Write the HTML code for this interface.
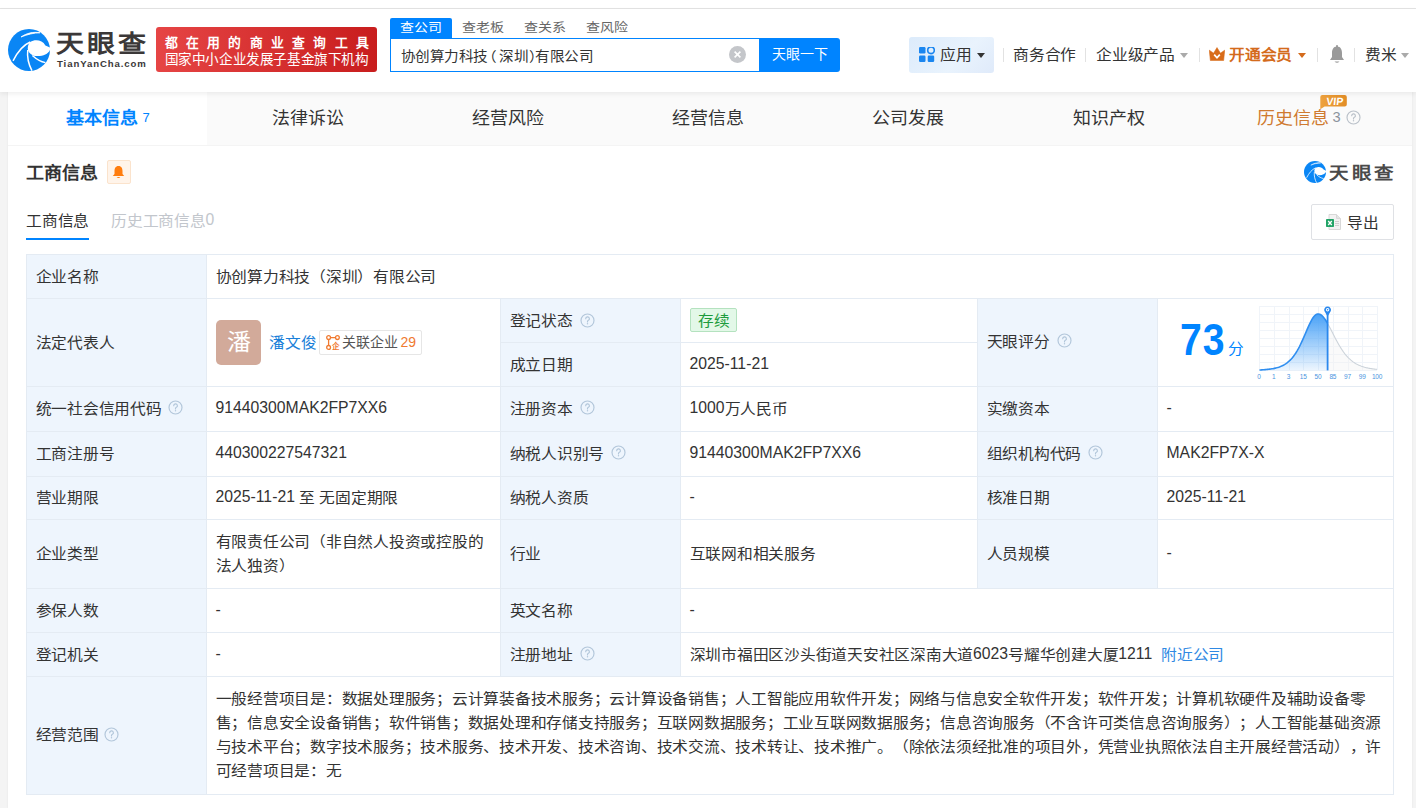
<!DOCTYPE html>
<html lang="zh-CN">
<head>
<meta charset="utf-8">
<title>天眼查</title>
<style>
*{box-sizing:border-box;margin:0;padding:0}
html,body{width:1416px;height:808px;overflow:hidden}
body{text-spacing-trim:space-all;position:relative;background:#f4f4f4;font-family:"Liberation Sans",sans-serif;color:#333;font-size:15.75px}
.a{position:absolute;white-space:nowrap}
.t{position:absolute;white-space:nowrap;line-height:24px;height:24px}
.sep{position:absolute;top:48px;width:1px;height:14px;background:#e2e2e2}
.caret{position:absolute;width:0;height:0;border-left:4px solid transparent;border-right:4px solid transparent;border-top:5px solid #999}
.tab{position:absolute;top:92px;height:53px;line-height:53px;font-size:18px;text-align:center;color:#333}
.cell{position:absolute;background:#fff}
.lb{background:#eef5fd}
.q{position:absolute;width:15px;height:15px}
.c,.c0{display:inline-block;transform:scaleY(.94);transform-origin:50% 46%;letter-spacing:-.25px}
.c0{letter-spacing:0}
.t .c{transform:translateY(1px) scaleY(.94)}
</style>
</head>
<body>
<div class="a" style="left:0;top:0;width:1416px;height:9px;background:#fff;border-bottom:1px solid #e3e3e3"></div>
<div class="a" style="left:0;top:9px;width:1416px;height:83px;background:#fff;box-shadow:0 2px 5px rgba(0,0,0,.065);z-index:3"></div>
<div class="a" style="left:0;top:0;width:1416px;height:92px;z-index:4">
<svg viewBox="0 0 100 100" width="42" height="42" style="position:absolute;left:8px;top:29px"><circle cx="50" cy="50" r="50" fill="#0a86f5"/><path d="M53 31 C64 24 82 26 89 39 L100 44 L100 50 C95 61 80 66 64 64 C54 62 47 54 47 46 C47 39 50 34 53 31 Z" fill="#fff"/><path d="M12 76 C22 56 36 38 53 31" stroke="#fff" stroke-width="3.5" fill="none"/><path d="M47 50 C45 68 50 86 57 99" stroke="#fff" stroke-width="3.5" fill="none"/><path d="M58 63 C68 72 78 78 89 80" stroke="#fff" stroke-width="3.5" fill="none"/><path d="M31 19 C44 10 60 6 76 9 C62 9 46 13 31 19 Z" fill="#fff" stroke="#fff" stroke-width="2"/></svg>
<div class="a" style="left:56px;top:26px;font-size:28px;line-height:36px;font-weight:bold;color:#3b3838;letter-spacing:3px;transform:scaleY(.86);transform-origin:0 60%">天眼查</div>
<div class="a" style="left:57px;top:57px;font-size:9.6px;line-height:14px;font-weight:bold;color:#3b3838;letter-spacing:0.9px">TianYanCha.com</div>
<div class="a" style="left:156px;top:27px;width:221px;height:45px;border-radius:3px;background:linear-gradient(90deg,#e64545,#c81d1d)"><div class="a" style="left:8.5px;top:7px;font-size:12.8px;line-height:18px;font-weight:bold;color:#fff;letter-spacing:8.25px">都在用的商业查询工具</div><div class="a" style="left:8.5px;top:24px;font-size:13.6px;line-height:18px;color:#fff;letter-spacing:-0.4px">国家中小企业发展子基金旗下机构</div></div>
<div class="a" style="left:390px;top:18px;width:62px;height:21px;background:#0084ff;border-radius:2px 2px 0 0"></div>
<div class="a" style="left:400px;top:18px;font-size:14px;line-height:20px;color:#fff"><span class="c0" style="transform:scaleY(.88);transform-origin:50% 15%">查公司</span></div>
<div class="a" style="left:462px;top:18px;font-size:14px;line-height:20px;color:#666"><span class="c0" style="transform:scaleY(.88);transform-origin:50% 15%">查老板</span></div>
<div class="a" style="left:524px;top:18px;font-size:14px;line-height:20px;color:#666"><span class="c0" style="transform:scaleY(.88);transform-origin:50% 15%">查关系</span></div>
<div class="a" style="left:586px;top:18px;font-size:14px;line-height:20px;color:#666"><span class="c0" style="transform:scaleY(.88);transform-origin:50% 15%">查风险</span></div>
<div class="a" style="left:390px;top:38px;width:370px;height:34px;border:1px solid #0084ff;background:#fff"></div>
<div class="a" style="left:400.8px;top:44px;font-size:14.6px;line-height:24px;color:#333"><span class="c0" style="letter-spacing:-.5px">协创算力科技</span></div>
<div class="a" style="left:481.5px;top:44px;font-size:14.6px;line-height:24px;color:#333"><span class="c0" style="letter-spacing:0">（</span></div>
<div class="a" style="left:499.2px;top:44px;font-size:14.6px;line-height:24px;color:#333"><span class="c0" style="letter-spacing:-.5px">深圳</span></div>
<div class="a" style="left:529px;top:44px;font-size:14.6px;line-height:24px;color:#333"><span class="c0" style="letter-spacing:0">）</span></div>
<div class="a" style="left:535.4px;top:44px;font-size:14.6px;line-height:24px;color:#333"><span class="c0" style="letter-spacing:-.5px">有限公司</span></div>
<svg class="a" style="left:729px;top:46px" width="17" height="17" viewBox="0 0 17 17"><circle cx="8.5" cy="8.5" r="8.5" fill="#c4c6ca"/><path d="M5.6 5.6l5.8 5.8M11.4 5.6l-5.8 5.8" stroke="#fff" stroke-width="1.6"/></svg>
<div class="a" style="left:759px;top:38px;width:81px;height:34px;background:#0084ff;border-radius:0 3px 3px 0"></div>
<div class="a" style="left:771.5px;top:41.5px;font-size:14px;line-height:24px;color:#fff"><span class="c0">天眼一下</span></div>
<div class="a" style="left:909px;top:37px;width:85px;height:36px;background:linear-gradient(135deg,#dcebfb,#e9f3fd 60%,#dfeafa);border-radius:3px"></div>
<svg class="a" style="left:919px;top:47px" width="16" height="15" viewBox="0 0 16 15"><rect x="0" y="0" width="6.5" height="6.5" rx="1.2" fill="#1a86f0"/><circle cx="12" cy="3.3" r="3.3" fill="none" stroke="#1a86f0" stroke-width="1.6"/><rect x="0" y="8.5" width="6.5" height="6.5" rx="1.2" fill="#1a86f0"/><rect x="8.7" y="8.5" width="6.5" height="6.5" rx="1.2" fill="#1a86f0"/></svg>
<div class="t" style="left:940px;top:42px;color:#333"><span class="c">应用</span></div>
<div class="caret" style="left:977px;top:53px;border-top-color:#333"></div>
<div class="sep" style="left:1003px"></div>
<div class="sep" style="left:1085px"></div>
<div class="sep" style="left:1199px"></div>
<div class="sep" style="left:1317px"></div>
<div class="sep" style="left:1354px"></div>
<div class="t" style="left:1013px;top:42px"><span class="c">商务合作</span></div>
<div class="t" style="left:1096px;top:42px"><span class="c">企业级产品</span></div>
<div class="caret" style="left:1180px;top:53px;border-top-color:#aaa"></div>
<svg class="a" style="left:1209px;top:47px" width="16" height="14" viewBox="0 0 16 14"><path d="M0.3 3.2 L4.6 6.2 L8 0.6 L11.4 6.2 L15.7 3.2 L14.6 13.6 L1.4 13.6 Z" fill="#d86c1a" stroke="#d86c1a" stroke-width=".6" stroke-linejoin="round"/><path d="M5.2 7.6 L8 10.8 L10.8 7.6" stroke="#fff" stroke-width="1.7" fill="none"/></svg>
<div class="t" style="left:1229px;top:42px;color:#d46b1c;font-weight:bold"><span class="c">开通会员</span></div>
<div class="caret" style="left:1298px;top:53px;border-top-color:#d46b1c"></div>
<svg class="a" style="left:1329px;top:45px" width="16" height="19" viewBox="0 0 16 19"><path d="M8 1.5 C4 1.5 3 5 3 8 L3 12 L1 15 L15 15 L13 12 L13 8 C13 5 12 1.5 8 1.5 Z" fill="#9a9a9a"/><rect x="7" y="0" width="2" height="2.5" rx="1" fill="#9a9a9a"/><path d="M5.5 16.5 Q8 19 10.5 16.5 Z" fill="#9a9a9a"/></svg>
<div class="t" style="left:1365px;top:42px"><span class="c">费米</span></div>
<div class="caret" style="left:1401px;top:53px;border-top-color:#aaa"></div>
</div>
<div class="a" style="left:8px;top:92px;width:1404px;height:716px;background:#fff;box-shadow:0 0 2px rgba(0,0,0,.07)"></div>
<div class="a" style="left:8px;top:92px;width:1404px;height:53px;background:#fafafa"></div>
<div class="a" style="left:8px;top:92px;width:199px;height:53px;background:#fff"></div>
<div class="a" style="left:8px;top:145px;width:1404px;height:1px;background:#f4f4f4"></div>
<div class="tab" style="left:8.00px;width:200.10px"><b style="color:#0084ff"><span class="c0">基本信息</span></b><span style="font-size:13px;color:#0084ff;margin-left:4px;position:relative;top:-2px">7</span></div>
<div class="tab" style="left:208.10px;width:200.10px"><span class="c0">法律诉讼</span></div>
<div class="tab" style="left:408.20px;width:200.10px"><span class="c0">经营风险</span></div>
<div class="tab" style="left:608.30px;width:200.10px"><span class="c0">经营信息</span></div>
<div class="tab" style="left:808.40px;width:200.10px"><span class="c0">公司发展</span></div>
<div class="tab" style="left:1008.50px;width:200.10px"><span class="c0">知识产权</span></div>
<div class="tab" style="left:1208.60px;width:200.10px"><span style="color:#cf7a30"><span class="c0">历史信息</span></span><span style="font-size:14.6px;color:#8c939d;margin-left:4px;position:relative;top:-2px">3</span><span style="display:inline-block;width:20px"></span></div>
<svg class="q" style="left:1346px;top:110.3px" viewBox="0 0 15 15"><circle cx="7.5" cy="7.5" r="6.5" fill="none" stroke="#bac1c9" stroke-width="1.15"/><path d="M5.7 5.7a1.85 1.85 0 1 1 2.7 1.65c-.55.3-.9.6-.9 1.25v.35" fill="none" stroke="#bac1c9" stroke-width="1.15" stroke-linecap="round"/><circle cx="7.5" cy="10.7" r=".7" fill="#bac1c9"/></svg>
<svg class="a" style="left:1320px;top:95px" width="28" height="15" viewBox="0 0 28 15"><defs><linearGradient id="vg" x1="0" x2="1"><stop offset="0" stop-color="#eea23e"/><stop offset="1" stop-color="#e28d26"/></linearGradient></defs><path d="M2.3 0 H24.7 Q26.8 0 26.8 2 V9.6 Q26.8 11.6 24.7 11.6 H4.6 L0.3 14.2 V2 Q0.3 0 2.3 0 Z" fill="url(#vg)"/><text x="14.6" y="10.2" font-family="Liberation Sans" font-weight="bold" font-size="10.5" fill="#fff" text-anchor="middle" transform="skewX(-6) translate(1,0)">VIP</text></svg>
<div class="a" style="left:26px;top:160px;font-size:18px;line-height:26px;font-weight:bold;color:#333"><span class="c0">工商信息</span></div>
<div class="a" style="left:107px;top:160px;width:24px;height:24px;background:#fff4ea;border:1px solid #fbe3cc;border-radius:2px"></div>
<svg class="a" style="left:112px;top:165px" width="13" height="14" viewBox="0 0 13 14"><path d="M6.5 1 C3.5 1 2.5 3.5 2.5 6 L2.5 9 L0.8 11 L12.2 11 L10.5 9 L10.5 6 C10.5 3.5 9.5 1 6.5 1 Z" fill="#ff7d0f"/><path d="M4.6 12 Q6.5 14.2 8.4 12 Z" fill="#ff7d0f"/></svg>
<svg viewBox="0 0 100 100" width="22" height="22" style="position:absolute;left:1304px;top:161px"><circle cx="50" cy="50" r="50" fill="#0a86f5"/><path d="M53 31 C64 24 82 26 89 39 L100 44 L100 50 C95 61 80 66 64 64 C54 62 47 54 47 46 C47 39 50 34 53 31 Z" fill="#fff"/><path d="M12 76 C22 56 36 38 53 31" stroke="#fff" stroke-width="3.5" fill="none"/><path d="M47 50 C45 68 50 86 57 99" stroke="#fff" stroke-width="3.5" fill="none"/><path d="M58 63 C68 72 78 78 89 80" stroke="#fff" stroke-width="3.5" fill="none"/><path d="M31 19 C44 10 60 6 76 9 C62 9 46 13 31 19 Z" fill="#fff" stroke="#fff" stroke-width="2"/></svg>
<div class="a" style="left:1329px;top:157.5px;font-size:19.5px;line-height:28px;font-weight:bold;color:#4a4a4a;letter-spacing:2.6px;transform:scaleY(.88);transform-origin:0 75%">天眼查</div>
<div class="t" style="left:26px;top:208px;color:#333"><span class="c">工商信息</span></div>
<div class="a" style="left:26px;top:238px;width:63px;height:2px;background:#0084ff"></div>
<div class="t" style="left:111px;top:208px;color:#c2c6cc"><span class="c">历史工商信息</span>0</div>
<div class="a" style="left:1311px;top:204px;width:83px;height:36px;border:1px solid #dfe1e5;border-radius:2px;background:#fff"></div>
<svg class="a" style="left:1326px;top:214px" width="15" height="16" viewBox="0 0 15 16"><path d="M3 0.5 H10.5 L14.5 4.5 V15.5 H3 Z" fill="#f2f2f2" stroke="#d8d8d8" stroke-width="1"/><path d="M10.5 0.5 V4.5 H14.5" fill="#e4e4e4" stroke="#d8d8d8" stroke-width="1"/><rect x="9" y="7" width="4" height="1" fill="#cfcfcf"/><rect x="9" y="9" width="4" height="1" fill="#cfcfcf"/><rect x="9" y="11" width="4" height="1" fill="#cfcfcf"/><rect x="0" y="5" width="8" height="8" rx="0.8" fill="#21a366"/><path d="M2.2 7 L5.8 11 M5.8 7 L2.2 11" stroke="#fff" stroke-width="1.3"/></svg>
<div class="t" style="left:1347px;top:210px;color:#333"><span class="c">导出</span></div>
<div class="a" style="left:26px;top:254px;width:1368px;height:541px;background:#e4ebf3"></div>
<div class="cell lb" style="left:27px;top:255px;width:179px;height:43px"></div>
<div class="cell" style="left:207px;top:255px;width:1186px;height:43px"></div>
<div class="t" style="left:35.5px;top:263.8px;"><span class="c">企业名称</span></div>
<div class="t" style="left:215.5px;top:263.8px;"><span class="c">协创算力科技（深圳）有限公司</span></div>
<div class="cell lb" style="left:27px;top:299px;width:179px;height:87px"></div>
<div class="cell" style="left:207px;top:299px;width:293px;height:87px"></div>
<div class="cell lb" style="left:501px;top:299px;width:179px;height:43px"></div>
<div class="cell" style="left:681px;top:299px;width:296px;height:43px"></div>
<div class="cell lb" style="left:501px;top:343px;width:179px;height:43px"></div>
<div class="cell" style="left:681px;top:343px;width:296px;height:43px"></div>
<div class="cell lb" style="left:978px;top:299px;width:179px;height:87px"></div>
<div class="cell" style="left:1158px;top:299px;width:235px;height:87px"></div>
<div class="t" style="left:35.5px;top:329.8px;"><span class="c">法定代表人</span></div>
<div class="a" style="left:216px;top:320px;width:45px;height:45px;background:#d2aa9a;border-radius:5px;color:#fff;font-size:24px;line-height:45px;text-align:center"><span class="c0">潘</span></div>
<div class="t" style="left:269px;top:329.8px;color:#1a7fd9"><span class="c">潘文俊</span></div>
<div class="a" style="left:319px;top:330px;width:103px;height:25px;border:1px solid #e6e6e6;border-radius:2px;background:#fff"></div>
<svg class="a" style="left:326px;top:335px" width="14" height="15" viewBox="0 0 14 15"><circle cx="2.6" cy="2.6" r="1.9" fill="none" stroke="#f07a30" stroke-width="1.3"/><circle cx="11.4" cy="2.6" r="1.9" fill="none" stroke="#f07a30" stroke-width="1.3"/><circle cx="2.6" cy="12.4" r="1.9" fill="none" stroke="#f07a30" stroke-width="1.3"/><path d="M4.5 2.6 H9.5 M2.6 4.5 V10.5" stroke="#f07a30" stroke-width="1.3"/><text x="9.6" y="14" font-size="7.5" font-weight="bold" fill="#f07a30" text-anchor="middle">企</text></svg>
<div class="a" style="left:342px;top:331px;font-size:14px;line-height:22px;color:#555"><span class="c0">关联企业</span><span style="color:#f07a30;margin-left:2.5px">29</span></div>
<div class="t" style="left:509.5px;top:307.8px;"><span class="c">登记状态</span></div>
<svg class="q" style="left:580px;top:312.8px" viewBox="0 0 15 15"><circle cx="7.5" cy="7.5" r="6.5" fill="none" stroke="#b2c6da" stroke-width="1.15"/><path d="M5.7 5.7a1.85 1.85 0 1 1 2.7 1.65c-.55.3-.9.6-.9 1.25v.35" fill="none" stroke="#b2c6da" stroke-width="1.15" stroke-linecap="round"/><circle cx="7.5" cy="10.7" r=".7" fill="#b2c6da"/></svg>
<div class="a" style="left:690px;top:308px;width:47px;height:24px;background:#e3f8e8;border:1px solid #b4e2bf;border-radius:2px;color:#1e9c3d;font-size:15.75px;line-height:23px;text-align:center"><span class="c0" style="letter-spacing:-.25px">存续</span></div>
<div class="t" style="left:509.5px;top:351.8px;"><span class="c">成立日期</span></div>
<div class="t" style="left:689.5px;top:351.8px;">2025-11-21</div>
<div class="t" style="left:986.5px;top:328.8px;"><span class="c">天眼评分</span></div>
<svg class="q" style="left:1057px;top:332.8px" viewBox="0 0 15 15"><circle cx="7.5" cy="7.5" r="6.5" fill="none" stroke="#b2c6da" stroke-width="1.15"/><path d="M5.7 5.7a1.85 1.85 0 1 1 2.7 1.65c-.55.3-.9.6-.9 1.25v.35" fill="none" stroke="#b2c6da" stroke-width="1.15" stroke-linecap="round"/><circle cx="7.5" cy="10.7" r=".7" fill="#b2c6da"/></svg>
<div class="a" style="left:1179.5px;top:315px;font-size:43.5px;line-height:50px;font-weight:bold;color:#0084ff;letter-spacing:1px;transform:scaleX(.9);transform-origin:0 50%">73</div>
<div class="a" style="left:1228px;top:338px;font-size:15.75px;line-height:22px;color:#0084ff"><span class="c">分</span></div>
<div class="a" style="left:1259.0px;top:306px;width:1px;height:64px;background:#f0f4f9"></div><div class="a" style="left:1273.8px;top:306px;width:1px;height:64px;background:#f0f4f9"></div><div class="a" style="left:1288.5px;top:306px;width:1px;height:64px;background:#f0f4f9"></div><div class="a" style="left:1303.2px;top:306px;width:1px;height:64px;background:#f0f4f9"></div><div class="a" style="left:1318.0px;top:306px;width:1px;height:64px;background:#f0f4f9"></div><div class="a" style="left:1332.8px;top:306px;width:1px;height:64px;background:#f0f4f9"></div><div class="a" style="left:1347.5px;top:306px;width:1px;height:64px;background:#f0f4f9"></div><div class="a" style="left:1362.2px;top:306px;width:1px;height:64px;background:#f0f4f9"></div><div class="a" style="left:1377.0px;top:306px;width:1px;height:64px;background:#f0f4f9"></div><div class="a" style="left:1259px;top:306.0px;width:118px;height:1px;background:#f0f4f9"></div><div class="a" style="left:1259px;top:314.0px;width:118px;height:1px;background:#f0f4f9"></div><div class="a" style="left:1259px;top:322.0px;width:118px;height:1px;background:#f0f4f9"></div><div class="a" style="left:1259px;top:330.0px;width:118px;height:1px;background:#f0f4f9"></div><div class="a" style="left:1259px;top:338.0px;width:118px;height:1px;background:#f0f4f9"></div><div class="a" style="left:1259px;top:346.0px;width:118px;height:1px;background:#f0f4f9"></div><div class="a" style="left:1259px;top:354.0px;width:118px;height:1px;background:#f0f4f9"></div><div class="a" style="left:1259px;top:362.0px;width:118px;height:1px;background:#f0f4f9"></div><div class="a" style="left:1259px;top:370.0px;width:118px;height:1px;background:#f0f4f9"></div>
<svg class="a" style="left:1256px;top:300px" width="124" height="84" viewBox="0 0 124 84"><defs><linearGradient id="cg" x1="0" y1="0" x2="0" y2="1"><stop offset="0" stop-color="#4aa2f7"/><stop offset="1" stop-color="#4aa2f7" stop-opacity=".1"/></linearGradient></defs><polygon points="3.5,70.4 3.50,69.98 4.63,69.93 5.77,69.87 6.90,69.80 8.04,69.72 9.18,69.63 10.31,69.54 11.44,69.42 12.58,69.30 13.71,69.16 14.85,69.00 15.98,68.82 17.12,68.62 18.25,68.39 19.39,68.13 20.52,67.85 21.66,67.52 22.79,67.16 23.93,66.75 25.06,66.30 26.20,65.79 27.33,65.22 28.47,64.58 29.61,63.87 30.74,63.08 31.87,62.20 33.01,61.22 34.14,60.15 35.28,58.96 36.41,57.65 37.55,56.22 38.68,54.65 39.82,52.95 40.95,51.11 42.09,49.13 43.23,47.01 44.36,44.76 45.49,42.39 46.63,39.91 47.76,37.35 48.90,34.72 50.03,32.07 51.17,29.43 52.30,26.84 53.44,24.36 54.57,22.03 55.71,19.90 56.84,18.03 57.98,16.46 59.11,15.24 60.25,14.40 61.38,13.96 62.52,13.93 63.65,14.22 64.79,14.80 65.92,15.66 67.06,16.79 68.19,18.15 69.33,19.74 70.46,21.50 71.60,23.43 71.6,70.4" fill="url(#cg)"/><polygon points="71.6,70.4 71.60,23.43 72.42,24.90 73.25,26.43 74.07,28.00 74.89,29.60 75.72,31.21 76.54,32.84 77.36,34.46 78.19,36.08 79.01,37.68 79.83,39.26 80.66,40.80 81.48,42.31 82.30,43.78 83.13,45.21 83.95,46.59 84.77,47.92 85.60,49.20 86.42,50.43 87.24,51.60 88.07,52.73 88.89,53.80 89.71,54.82 90.54,55.78 91.36,56.70 92.18,57.57 93.01,58.39 93.83,59.16 94.65,59.90 95.48,60.58 96.30,61.23 97.12,61.84 97.95,62.41 98.77,62.95 99.59,63.45 100.42,63.92 101.24,64.36 102.06,64.78 102.89,65.16 103.71,65.53 104.53,65.86 105.36,66.18 106.18,66.47 107.00,66.74 107.83,67.00 108.65,67.24 109.47,67.46 110.30,67.67 111.12,67.86 111.94,68.04 112.77,68.21 113.59,68.36 114.41,68.51 115.24,68.64 116.06,68.77 116.88,68.88 117.71,68.99 118.53,69.09 119.35,69.18 120.18,69.27 121.00,69.35 121,70.4" fill="#f3f3f3" opacity=".4"/><polyline points="3.50,69.98 4.63,69.93 5.77,69.87 6.90,69.80 8.04,69.72 9.18,69.63 10.31,69.54 11.44,69.42 12.58,69.30 13.71,69.16 14.85,69.00 15.98,68.82 17.12,68.62 18.25,68.39 19.39,68.13 20.52,67.85 21.66,67.52 22.79,67.16 23.93,66.75 25.06,66.30 26.20,65.79 27.33,65.22 28.47,64.58 29.61,63.87 30.74,63.08 31.87,62.20 33.01,61.22 34.14,60.15 35.28,58.96 36.41,57.65 37.55,56.22 38.68,54.65 39.82,52.95 40.95,51.11 42.09,49.13 43.23,47.01 44.36,44.76 45.49,42.39 46.63,39.91 47.76,37.35 48.90,34.72 50.03,32.07 51.17,29.43 52.30,26.84 53.44,24.36 54.57,22.03 55.71,19.90 56.84,18.03 57.98,16.46 59.11,15.24 60.25,14.40 61.38,13.96 62.52,13.93 63.65,14.22 64.79,14.80 65.92,15.66 67.06,16.79 68.19,18.15 69.33,19.74 70.46,21.50 71.60,23.43" fill="none" stroke="#2f8ef0" stroke-width="1.6"/><polyline points="71.60,23.43 72.42,24.90 73.25,26.43 74.07,28.00 74.89,29.60 75.72,31.21 76.54,32.84 77.36,34.46 78.19,36.08 79.01,37.68 79.83,39.26 80.66,40.80 81.48,42.31 82.30,43.78 83.13,45.21 83.95,46.59 84.77,47.92 85.60,49.20 86.42,50.43 87.24,51.60 88.07,52.73 88.89,53.80 89.71,54.82 90.54,55.78 91.36,56.70 92.18,57.57 93.01,58.39 93.83,59.16 94.65,59.90 95.48,60.58 96.30,61.23 97.12,61.84 97.95,62.41 98.77,62.95 99.59,63.45 100.42,63.92 101.24,64.36 102.06,64.78 102.89,65.16 103.71,65.53 104.53,65.86 105.36,66.18 106.18,66.47 107.00,66.74 107.83,67.00 108.65,67.24 109.47,67.46 110.30,67.67 111.12,67.86 111.94,68.04 112.77,68.21 113.59,68.36 114.41,68.51 115.24,68.64 116.06,68.77 116.88,68.88 117.71,68.99 118.53,69.09 119.35,69.18 120.18,69.27 121.00,69.35" fill="none" stroke="#ccd3da" stroke-width="1.1"/><path d="M71.6 12 L71.6 70.4" stroke="#2a88ee" stroke-width="1.8"/><path d="M68.4 11 A3.4 3.4 0 1 1 74.8 11 L71.6 16.5 Z" fill="#2a88ee"/><circle cx="71.6" cy="9.8" r="1.7" fill="#fff"/><circle cx="71.6" cy="9.8" r=".8" fill="#2a88ee"/></svg>
<div class="a" style="left:1249.0px;top:372.5px;width:20px;text-align:center;font-size:6.5px;line-height:8px;color:#4a94e0;letter-spacing:-.2px">0</div>
<div class="a" style="left:1263.8px;top:372.5px;width:20px;text-align:center;font-size:6.5px;line-height:8px;color:#4a94e0;letter-spacing:-.2px">1</div>
<div class="a" style="left:1278.5px;top:372.5px;width:20px;text-align:center;font-size:6.5px;line-height:8px;color:#4a94e0;letter-spacing:-.2px">3</div>
<div class="a" style="left:1293.2px;top:372.5px;width:20px;text-align:center;font-size:6.5px;line-height:8px;color:#4a94e0;letter-spacing:-.2px">15</div>
<div class="a" style="left:1308.0px;top:372.5px;width:20px;text-align:center;font-size:6.5px;line-height:8px;color:#4a94e0;letter-spacing:-.2px">50</div>
<div class="a" style="left:1322.8px;top:372.5px;width:20px;text-align:center;font-size:6.5px;line-height:8px;color:#4a94e0;letter-spacing:-.2px">85</div>
<div class="a" style="left:1337.5px;top:372.5px;width:20px;text-align:center;font-size:6.5px;line-height:8px;color:#4a94e0;letter-spacing:-.2px">97</div>
<div class="a" style="left:1352.2px;top:372.5px;width:20px;text-align:center;font-size:6.5px;line-height:8px;color:#4a94e0;letter-spacing:-.2px">99</div>
<div class="a" style="left:1367.0px;top:372.5px;width:20px;text-align:center;font-size:6.5px;line-height:8px;color:#4a94e0;letter-spacing:-.2px">100</div>
<div class="cell lb" style="left:27px;top:387px;width:179px;height:44px"></div>
<div class="cell" style="left:207px;top:387px;width:293px;height:44px"></div>
<div class="cell lb" style="left:501px;top:387px;width:179px;height:44px"></div>
<div class="cell" style="left:681px;top:387px;width:296px;height:44px"></div>
<div class="cell lb" style="left:978px;top:387px;width:179px;height:44px"></div>
<div class="cell" style="left:1158px;top:387px;width:235px;height:44px"></div>
<div class="t" style="left:35.5px;top:396.3px;"><span class="c">统一社会信用代码</span></div>
<svg class="q" style="left:168px;top:399.8px" viewBox="0 0 15 15"><circle cx="7.5" cy="7.5" r="6.5" fill="none" stroke="#b2c6da" stroke-width="1.15"/><path d="M5.7 5.7a1.85 1.85 0 1 1 2.7 1.65c-.55.3-.9.6-.9 1.25v.35" fill="none" stroke="#b2c6da" stroke-width="1.15" stroke-linecap="round"/><circle cx="7.5" cy="10.7" r=".7" fill="#b2c6da"/></svg>
<div class="t" style="left:215.5px;top:396.3px;">91440300MAK2FP7XX6</div>
<div class="t" style="left:509.5px;top:396.3px;"><span class="c">注册资本</span></div>
<svg class="q" style="left:580px;top:399.8px" viewBox="0 0 15 15"><circle cx="7.5" cy="7.5" r="6.5" fill="none" stroke="#b2c6da" stroke-width="1.15"/><path d="M5.7 5.7a1.85 1.85 0 1 1 2.7 1.65c-.55.3-.9.6-.9 1.25v.35" fill="none" stroke="#b2c6da" stroke-width="1.15" stroke-linecap="round"/><circle cx="7.5" cy="10.7" r=".7" fill="#b2c6da"/></svg>
<div class="t" style="left:689.5px;top:396.3px;">1000<span class="c">万人民币</span></div>
<div class="t" style="left:986.5px;top:396.3px;"><span class="c">实缴资本</span></div>
<div class="t" style="left:1166.5px;top:396.3px;">-</div>
<div class="cell lb" style="left:27px;top:432px;width:179px;height:44px"></div>
<div class="cell" style="left:207px;top:432px;width:293px;height:44px"></div>
<div class="cell lb" style="left:501px;top:432px;width:179px;height:44px"></div>
<div class="cell" style="left:681px;top:432px;width:296px;height:44px"></div>
<div class="cell lb" style="left:978px;top:432px;width:179px;height:44px"></div>
<div class="cell" style="left:1158px;top:432px;width:235px;height:44px"></div>
<div class="t" style="left:35.5px;top:441.3px;"><span class="c">工商注册号</span></div>
<div class="t" style="left:215.5px;top:441.3px;">440300227547321</div>
<div class="t" style="left:509.5px;top:441.3px;"><span class="c">纳税人识别号</span></div>
<svg class="q" style="left:611px;top:444.8px" viewBox="0 0 15 15"><circle cx="7.5" cy="7.5" r="6.5" fill="none" stroke="#b2c6da" stroke-width="1.15"/><path d="M5.7 5.7a1.85 1.85 0 1 1 2.7 1.65c-.55.3-.9.6-.9 1.25v.35" fill="none" stroke="#b2c6da" stroke-width="1.15" stroke-linecap="round"/><circle cx="7.5" cy="10.7" r=".7" fill="#b2c6da"/></svg>
<div class="t" style="left:689.5px;top:441.3px;">91440300MAK2FP7XX6</div>
<div class="t" style="left:986.5px;top:441.3px;"><span class="c">组织机构代码</span></div>
<svg class="q" style="left:1088px;top:444.8px" viewBox="0 0 15 15"><circle cx="7.5" cy="7.5" r="6.5" fill="none" stroke="#b2c6da" stroke-width="1.15"/><path d="M5.7 5.7a1.85 1.85 0 1 1 2.7 1.65c-.55.3-.9.6-.9 1.25v.35" fill="none" stroke="#b2c6da" stroke-width="1.15" stroke-linecap="round"/><circle cx="7.5" cy="10.7" r=".7" fill="#b2c6da"/></svg>
<div class="t" style="left:1166.5px;top:441.3px;">MAK2FP7X-X</div>
<div class="cell lb" style="left:27px;top:477px;width:179px;height:42px"></div>
<div class="cell" style="left:207px;top:477px;width:293px;height:42px"></div>
<div class="cell lb" style="left:501px;top:477px;width:179px;height:42px"></div>
<div class="cell" style="left:681px;top:477px;width:296px;height:42px"></div>
<div class="cell lb" style="left:978px;top:477px;width:179px;height:42px"></div>
<div class="cell" style="left:1158px;top:477px;width:235px;height:42px"></div>
<div class="t" style="left:35.5px;top:485.3px;"><span class="c">营业期限</span></div>
<div class="t" style="left:215.5px;top:485.3px;">2025-11-21 <span class="c">至</span> <span class="c">无固定期限</span></div>
<div class="t" style="left:509.5px;top:485.3px;"><span class="c">纳税人资质</span></div>
<div class="t" style="left:689.5px;top:485.3px;">-</div>
<div class="t" style="left:986.5px;top:485.3px;"><span class="c">核准日期</span></div>
<div class="t" style="left:1166.5px;top:485.3px;">2025-11-21</div>
<div class="cell lb" style="left:27px;top:520px;width:179px;height:68px"></div>
<div class="cell" style="left:207px;top:520px;width:293px;height:68px"></div>
<div class="cell lb" style="left:501px;top:520px;width:179px;height:68px"></div>
<div class="cell" style="left:681px;top:520px;width:296px;height:68px"></div>
<div class="cell lb" style="left:978px;top:520px;width:179px;height:68px"></div>
<div class="cell" style="left:1158px;top:520px;width:235px;height:68px"></div>
<div class="t" style="left:35.5px;top:541.3px;"><span class="c">企业类型</span></div>
<div class="t" style="left:215.5px;top:528.8px;"><span class="c">有限责任公司（非自然人投资或控股的</span></div>
<div class="t" style="left:215.5px;top:552.8px;"><span class="c">法人独资）</span></div>
<div class="t" style="left:509.5px;top:541.3px;"><span class="c">行业</span></div>
<div class="t" style="left:689.5px;top:541.3px;"><span class="c">互联网和相关服务</span></div>
<div class="t" style="left:986.5px;top:541.3px;"><span class="c">人员规模</span></div>
<div class="t" style="left:1166.5px;top:541.3px;">-</div>
<div class="cell lb" style="left:27px;top:589px;width:179px;height:43px"></div>
<div class="cell" style="left:207px;top:589px;width:293px;height:43px"></div>
<div class="cell lb" style="left:501px;top:589px;width:179px;height:43px"></div>
<div class="cell" style="left:681px;top:589px;width:712px;height:43px"></div>
<div class="t" style="left:35.5px;top:597.8px;"><span class="c">参保人数</span></div>
<div class="t" style="left:215.5px;top:597.8px;">-</div>
<div class="t" style="left:509.5px;top:597.8px;"><span class="c">英文名称</span></div>
<div class="t" style="left:689.5px;top:597.8px;">-</div>
<div class="cell lb" style="left:27px;top:633px;width:179px;height:43px"></div>
<div class="cell" style="left:207px;top:633px;width:293px;height:43px"></div>
<div class="cell lb" style="left:501px;top:633px;width:179px;height:43px"></div>
<div class="cell" style="left:681px;top:633px;width:712px;height:43px"></div>
<div class="t" style="left:35.5px;top:641.8px;"><span class="c">登记机关</span></div>
<div class="t" style="left:215.5px;top:641.8px;">-</div>
<div class="t" style="left:509.5px;top:641.8px;"><span class="c">注册地址</span></div>
<svg class="q" style="left:580px;top:645.8px" viewBox="0 0 15 15"><circle cx="7.5" cy="7.5" r="6.5" fill="none" stroke="#b2c6da" stroke-width="1.15"/><path d="M5.7 5.7a1.85 1.85 0 1 1 2.7 1.65c-.55.3-.9.6-.9 1.25v.35" fill="none" stroke="#b2c6da" stroke-width="1.15" stroke-linecap="round"/><circle cx="7.5" cy="10.7" r=".7" fill="#b2c6da"/></svg>
<div class="t" style="left:689.5px;top:641.8px;"><span class="c">深圳市福田区沙头街道天安社区深南大道</span>6023<span class="c">号耀华创建大厦</span>1211 <span style="color:#2f89e3;margin-left:4.5px"><span class="c">附近公司</span></span></div>
<div class="cell lb" style="left:27px;top:677px;width:179px;height:117px"></div>
<div class="cell" style="left:207px;top:677px;width:1186px;height:117px"></div>
<div class="t" style="left:35.5px;top:722.3px;"><span class="c">经营范围</span></div>
<svg class="q" style="left:104px;top:726.8px" viewBox="0 0 15 15"><circle cx="7.5" cy="7.5" r="6.5" fill="none" stroke="#b2c6da" stroke-width="1.15"/><path d="M5.7 5.7a1.85 1.85 0 1 1 2.7 1.65c-.55.3-.9.6-.9 1.25v.35" fill="none" stroke="#b2c6da" stroke-width="1.15" stroke-linecap="round"/><circle cx="7.5" cy="10.7" r=".7" fill="#b2c6da"/></svg>
<div class="t" style="left:215.5px;top:685.8px;"><span class="c">一般经营项目是：数据处理服务；云计算装备技术服务；云计算设备销售；人工智能应用软件开发；网络与信息安全软件开发；软件开发；计算机软硬件及辅助设备零</span></div>
<div class="t" style="left:215.5px;top:709.8px;"><span class="c">售；信息安全设备销售；软件销售；数据处理和存储支持服务；互联网数据服务；工业互联网数据服务；信息咨询服务（不含许可类信息咨询服务）；人工智能基础资源</span></div>
<div class="t" style="left:215.5px;top:733.8px;"><span class="c">与技术平台；数字技术服务；技术服务、技术开发、技术咨询、技术交流、技术转让、技术推广。（除依法须经批准的项目外，凭营业执照依法自主开展经营活动），许</span></div>
<div class="t" style="left:215.5px;top:757.8px;"><span class="c">可经营项目是：无</span></div>
</body>
</html>
